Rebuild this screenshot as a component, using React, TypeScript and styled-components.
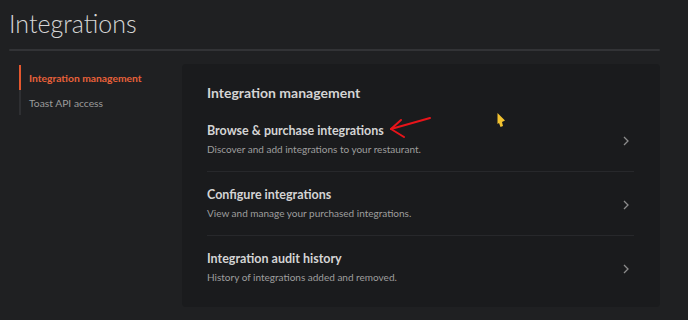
import React from 'react';
import styled, { createGlobalStyle } from 'styled-components';

const GlobalStyle = createGlobalStyle`
  html, body {
    margin: 0;
    padding: 0;
    background: #1f2022;
  }
  body {
    font-family: 'Lato', 'Noto Sans', sans-serif;
    color: #d2d2d2;
  }
`;

const Page = styled.div`
  position: relative;
  width: 688px;
  height: 320px;
  overflow: hidden;
  padding: 0 28px 0 9px;
  box-sizing: border-box;
`;

const PageTitle = styled.h1`
  margin: 0;
  padding-top: 7px;
  height: 42px;
  font-family: 'Lato', sans-serif;
  font-weight: 300;
  font-size: 25px;
  line-height: 32px;
  color: #d6d6d6;
`;

const Divider = styled.div`
  height: 2px;
  background: #323336;
  border-radius: 1px;
`;

const Body = styled.div`
  display: grid;
  grid-template-columns: 173px 1fr;
  margin-top: 13px;
`;

const SideNav = styled.nav`
  margin-top: 1px;
  margin-left: 10px;
  display: flex;
  flex-direction: column;
  align-self: start;
  border-left: 2px solid #2e2f32;
`;

const NavItem = styled.div<{ active?: boolean }>`
  height: 25px;
  display: flex;
  align-items: center;
  padding-left: 8px;
  margin-left: -2px;
  border-left: 2px solid ${(p) => (p.active ? '#e4572e' : 'transparent')};
  font-size: 10.3px;
  font-weight: ${(p) => (p.active ? 700 : 400)};
  color: ${(p) => (p.active ? '#e8603a' : '#9b9b9b')};
`;

const Card = styled.section`
  background: #1a1b1d;
  border-radius: 4px;
  padding: 19px 26px 10px 25px;
  height: 243px;
  box-sizing: border-box;
`;

const CardHeading = styled.h2`
  margin: 0 0 5px;
  font-size: 14px;
  line-height: 20px;
  font-weight: 700;
  color: #d4d4d4;
`;

const Row = styled.div<{ last?: boolean }>`
  display: flex;
  align-items: center;
  justify-content: space-between;
  padding: 14px 0 13px;
  border-bottom: ${(p) => (p.last ? 'none' : '1px solid #27282b')};
`;

const RowText = styled.div`
  display: flex;
  flex-direction: column;
`;

const RowTitle = styled.div`
  font-size: 12.5px;
  line-height: 18px;
  font-weight: 700;
  color: #d4d4d4;
`;

const RowDesc = styled.div`
  font-size: 10px;
  line-height: 18px;
  color: #9e9e9e;
`;

const Chevron = styled.svg`
  width: 6px;
  height: 10px;
  margin-right: 5px;
  margin-top: 1px;
`;

const Annotation = styled.svg`
  position: absolute;
  left: 0;
  top: 0;
  pointer-events: none;
`;

const rows = [
  { title: 'Browse & purchase integrations', desc: 'Discover and add integrations to your restaurant.' },
  { title: 'Configure integrations', desc: 'View and manage your purchased integrations.' },
  { title: 'Integration audit history', desc: 'History of integrations added and removed.' },
];

const App: React.FC = () => {
  return (
    <Page>
      <GlobalStyle />
      <PageTitle>Integrations</PageTitle>
      <Divider />
      <Body>
        <SideNav>
          <NavItem active>Integration management</NavItem>
          <NavItem>Toast API access</NavItem>
        </SideNav>
        <Card>
          <CardHeading>Integration management</CardHeading>
          {rows.map((r, i) => (
            <Row key={r.title} last={i === rows.length - 1}>
              <RowText>
                <RowTitle>{r.title}</RowTitle>
                <RowDesc>{r.desc}</RowDesc>
              </RowText>
              <Chevron viewBox="0 0 6 10">
                <path d="M1 1 L5 5 L1 9" fill="none" stroke="#8c8c8c" strokeWidth="1.3" />
              </Chevron>
            </Row>
          ))}
        </Card>
      </Body>
      <Annotation width="688" height="320" viewBox="0 0 688 320">
        <path d="M430 118 L391 129" stroke="#e8141a" strokeWidth="2" strokeLinecap="round" fill="none" />
        <path d="M401 120 L391 129 L404 137" stroke="#e8141a" strokeWidth="2" strokeLinecap="round" strokeLinejoin="round" fill="none" />
        <path d="M497.5 113 L505 120.5 L502 122 L503 126 L500.5 127 L499 123 L497.5 124 Z" fill="#f2c230" />
      </Annotation>
    </Page>
  );
};

export default App;
